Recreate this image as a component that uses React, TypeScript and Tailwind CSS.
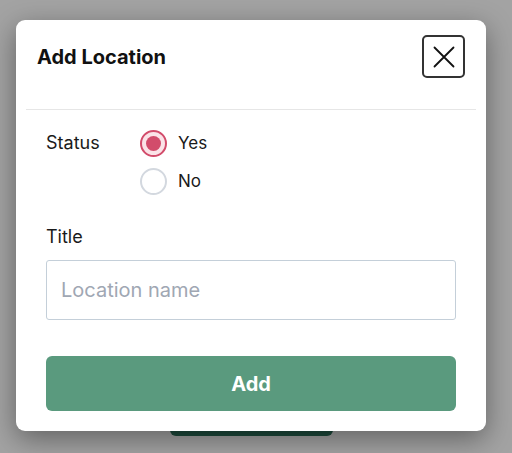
import React, { useState } from 'react';

function Radio({ checked, label, onSelect }: { checked: boolean; label: string; onSelect: () => void }) {
  return (
    <label className="flex items-center gap-[11px] cursor-pointer" onClick={onSelect}>
      {checked ? (
        <span className="flex h-[27px] w-[27px] items-center justify-center rounded-full border-2 border-[#d24c6b] bg-[#fbe3e8]">
          <span className="h-[15px] w-[15px] rounded-full bg-[#d24c6b]" />
        </span>
      ) : (
        <span className="h-[27px] w-[27px] rounded-full border-2 border-[#d3d8df] bg-white" />
      )}
      <span className="text-[17px] text-[#1a1a1a]">{label}</span>
    </label>
  );
}

export default function App() {
  const [status, setStatus] = useState<'yes' | 'no'>('yes');

  return (
    <div
      className="relative h-[453px] w-[512px] overflow-hidden bg-[#a3a3a3] pl-[16px] pt-[20px]"
      style={{ fontFamily: 'Inter, "Noto Sans", sans-serif' }}
    >
      {/* page button peeking out below the dialog */}
      <div className="absolute left-[170px] top-[398px] h-[38px] w-[163px] rounded-md bg-[#1d4b3c]" />

      <div className="relative w-[470px] rounded-[9px] bg-white shadow-[0_8px_28px_rgba(0,0,0,0.4)]">
        <div className="flex items-start justify-between px-[21px] pb-[31px] pt-[15px]">
          <h2 className="mt-[9px] text-[20px] font-bold leading-[26px] text-[#111]">Add Location</h2>
          <button className="flex h-[43px] w-[43px] items-center justify-center rounded-[5px] border-2 border-[#333]">
            <svg width="22" height="22" viewBox="0 0 22 22" fill="none" stroke="#111" strokeWidth="1.8" strokeLinecap="round">
              <path d="M1.5 1.5L20.5 20.5M20.5 1.5L1.5 20.5" />
            </svg>
          </button>
        </div>
        <div className="mx-[10px] h-px bg-[#e6e6e6]" />

        <div className="px-[30px] pb-[20px] pt-[20px]">
          <div className="flex">
            <span className="w-[94px] text-[18px] leading-[26px] text-[#1a1a1a]">Status</span>
            <div className="flex flex-col gap-[11px]">
              <Radio checked={status === 'yes'} label="Yes" onSelect={() => setStatus('yes')} />
              <Radio checked={status === 'no'} label="No" onSelect={() => setStatus('no')} />
            </div>
          </div>

          <label className="mb-[11px] mt-[30px] block text-[18px] leading-[24px] text-[#1a1a1a]">Title</label>
          <input
            placeholder="Location name"
            className="block h-[60px] w-full rounded-[3px] border border-[#c4cfd9] px-[14px] text-[20px] text-[#111] outline-none placeholder:text-[#a0a7b3]"
          />

          <button className="mt-[36px] flex h-[55px] w-full items-center justify-center rounded-[6px] bg-[#5a9a7e] text-[20px] font-bold text-white">
            Add
          </button>
        </div>
      </div>
    </div>
  );
}
